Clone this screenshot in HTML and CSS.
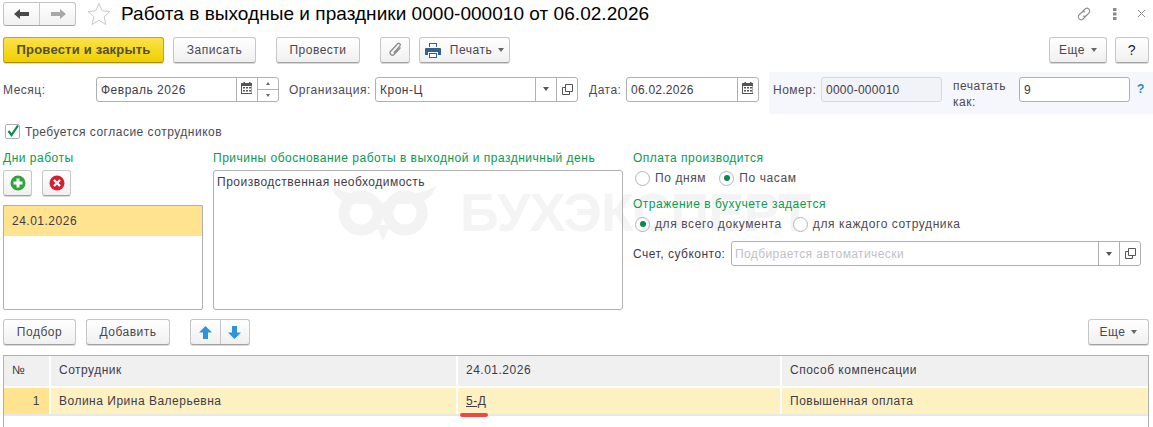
FILE: index.html
```html
<!DOCTYPE html>
<html lang="ru">
<head>
<meta charset="utf-8">
<title>Работа в выходные и праздники</title>
<link rel="stylesheet" href="styles.css">
</head>
<body>
<div class="page">
  <svg class="wm-owl" viewBox="0 0 108 58" width="108" height="58"><path fill="none" stroke="#f3f3f3" stroke-width="11" d="M31 13a17 17 0 1 0 .1 0zM75 13a17 17 0 1 0 .1 0z"/><path fill="#f3f3f3" d="M0 2C14 12 34 10 53 20 72 10 94 12 107 2 102 14 96 17 90 20L60 22 53 27 46 22 16 20C10 17 4 12 0 2zM46 42h14L53 58z"/></svg>
  <div class="wm-text">БУХЭКСПЕРТ</div>

  <header class="titlebar">
    <div class="nav">
      <span class="nav-cell"><svg width="16" height="12" viewBox="0 0 16 12"><path fill="#4a4a4a" d="M0 6l6-5v3h9v4H6v3z"/></svg></span>
      <span class="nav-cell"><svg width="16" height="12" viewBox="0 0 16 12"><path fill="#a8a8a8" d="M16 6l-6-5v3H1v4h9v3z"/></svg></span>
    </div>
    <svg class="star" width="24" height="24" viewBox="0 0 24 24"><path fill="#fff" stroke="#c9c9c9" d="M12 1.500l3.200 7.300 7.800.7-5.900 5.200 1.800 7.800L12 18.300 5.100 22.500l1.800-7.800L1 9.500l7.800-.7z"/></svg>
    <h1 class="title">Работа в выходные и праздники 0000-000010 от 06.02.2026</h1>
    <div class="win-icons">
      <svg width="18" height="18" viewBox="0 0 18 18"><g fill="none" stroke="#8a8a8a" stroke-width="1.100"><path d="M7.500 6.500l3-3a3 3 0 0 1 4 4l-3 3a3 3 0 0 1-3.500.5"/><path d="M10.500 11.500l-3 3a3 3 0 0 1-4-4l3-3a3 3 0 0 1 3.500-.5"/></g></svg>
      <svg class="dots" width="4" height="14" viewBox="0 0 4 14"><path fill="#8a8a8a" d="M0 1h3.500v3H0zM0 5.500h3.500v3H0zM0 10h3.500v3H0z"/></svg>
      <svg width="9" height="9" viewBox="0 0 9 9"><path stroke="#8a8a8a" d="M1 1l7 7M8 1L1 8"/></svg>
    </div>
  </header>

  <div class="toolbar top-toolbar">
    <button class="btn primary w161">Провести и закрыть</button>
    <button class="btn w83 ml9">Записать</button>
    <button class="btn w84 ml20">Провести</button>
    <button class="btn w30 ml20"><svg width="16" height="18" viewBox="0 0 16 18"><path fill="none" stroke="#8a8a8a" stroke-width="1.300" d="M13.500 6.500L7 13.500a2.300 2.300 0 0 1-3.300-3.200l7-7.500a1.500 1.500 0 0 1 2.200 2.100L6.800 12"/></svg></button>
    <button class="btn w91 ml9">
      <svg width="16" height="15" viewBox="0 0 16 15"><path fill="#31628f" d="M4 0h8v4H4zM1 5h14a1 1 0 0 1 1 1v6h-3V9H3v3H0V6a1 1 0 0 1 1-1zM4 10h8v5H4z"/><path fill="#fff" d="M5 1h6v3H5zM5 11h6v3H5z"/></svg>
      <span class="btn-text">Печать</span><i class="caret"></i>
    </button>
    <div class="spacer"></div>
    <button class="btn w58">Еще<i class="caret"></i></button>
    <button class="btn w34 ml8 qmark">?</button>
  </div>

  <div class="fields-row">
    <label class="lbl w93">Месяц:</label>
    <div class="field w183">
      <span class="val">Февраль 2026</span>
      <span class="addon cal"><svg class="cal-ico" width="12" height="12" viewBox="0 0 12 12"><path fill="#555" d="M1 1h1.500V0H4v1h4V0h1.500v1H11v11H0V1zM1 4v7h9.500V4z"/><path fill="#555" d="M2 5h2v1.500H2zM5 5h2v1.500H5zM8 5h2v1.500H8zM2 8h2v1.500H2zM5 8h2v1.500H5zM8 8h2v1.500H8z"/></svg></span>
      <span class="addon spin"><i class="up"></i><i class="down"></i></span>
    </div>
    <label class="lbl ml10 w86">Организация:</label>
    <div class="field w203">
      <span class="val">Крон-Ц</span>
      <span class="addon dd"><i class="caret dark"></i></span>
      <span class="addon cp"><svg width="11" height="11" viewBox="0 0 11 11"><path fill="none" stroke="#555" d="M3.500.5h7v7h-7zM3.500 3.500H.5v7h7V7.500"/></svg></span>
    </div>
    <label class="lbl ml11 w37">Дата:</label>
    <div class="field w133">
      <span class="val digits">06.02.2026</span>
      <span class="addon cal"><svg class="cal-ico" width="12" height="12" viewBox="0 0 12 12"><path fill="#555" d="M1 1h1.500V0H4v1h4V0h1.500v1H11v11H0V1zM1 4v7h9.500V4z"/><path fill="#555" d="M2 5h2v1.500H2zM5 5h2v1.500H5zM8 5h2v1.500H8zM2 8h2v1.500H2zM5 8h2v1.500H5zM8 8h2v1.500H8z"/></svg></span>
    </div>
    <div class="num-panel">
      <label class="lbl w48">Номер:</label>
      <div class="field ro w121"><span class="val digits">0000-000010</span></div>
      <label class="lbl print-as">печатать как:</label>
      <div class="field w111"><span class="val">9</span></div>
      <span class="hint">?</span>
    </div>
  </div>

  <label class="check-row">
    <svg width="16" height="16" viewBox="0 0 16 16"><rect x=".5" y=".5" width="14" height="14" rx="1.500" fill="#fff" stroke="#b0b0b0"/><path fill="none" stroke="#0b8a4f" stroke-width="2.200" d="M3.500 7l3 4L13 1.500"/></svg>
    Требуется согласие сотрудников
  </label>

  <div class="mid">
    <section class="col-days">
      <div class="green">Дни работы</div>
      <div class="icon-btns">
        <button class="btn w29"><svg width="16" height="16" viewBox="0 0 16 16"><circle cx="8" cy="8" r="7.500" fill="#2fa43a"/><path fill="#fff" d="M6.500 3.500h3v3h3v3h-3v3h-3v-3h-3v-3h3z"/></svg></button>
        <button class="btn w29 ml10"><svg width="16" height="16" viewBox="0 0 16 16"><circle cx="8" cy="8" r="7.500" fill="#d4202e"/><path stroke="#fff" stroke-width="2.200" d="M5 5l6 6M11 5l-6 6"/></svg></button>
      </div>
      <div class="day-list"><div class="day-sel">24.01.2026</div></div>
    </section>
    <section class="col-reason">
      <div class="green">Причины обоснование работы в выходной и праздничный день</div>
      <div class="reason-box">Производственная необходимость</div>
    </section>
    <section class="col-pay">
      <div class="green">Оплата производится</div>
      <div class="radios r1">
        <span class="radio"></span><span class="r-text">По дням</span>
        <span class="radio on next"></span><span class="r-text">По часам</span>
      </div>
      <div class="green g2">Отражение в бухучете задается</div>
      <div class="radios r2">
        <span class="radio on"></span><span class="r-text">для всего документа</span>
        <span class="radio next"></span><span class="r-text">для каждого сотрудника</span>
      </div>
      <div class="acc-row">
        <label class="lbl w98 dark-lbl">Счет, субконто:</label>
        <div class="field grow">
          <span class="val ph">Подбирается автоматически</span>
          <span class="addon dd"><i class="caret dark"></i></span>
          <span class="addon cp"><svg width="11" height="11" viewBox="0 0 11 11"><path fill="none" stroke="#555" d="M3.500.5h7v7h-7zM3.500 3.500H.5v7h7V7.500"/></svg></span>
        </div>
      </div>
    </section>
  </div>

  <div class="toolbar low-toolbar">
    <button class="btn w73">Подбор</button>
    <button class="btn w84 ml10">Добавить</button>
    <div class="arrows">
      <span class="arrow-cell"><svg width="13" height="13" viewBox="0 0 13 13"><path fill="#2f93dc" d="M6.500 0L13 6.500H9V13H4V6.500H0z"/></svg></span>
      <span class="arrow-cell"><svg width="13" height="13" viewBox="0 0 13 13"><path fill="#2f93dc" d="M6.500 13L13 6.500H9V0H4v6.500H0z"/></svg></span>
    </div>
    <div class="spacer"></div>
    <button class="btn w61">Еще<i class="caret"></i></button>
  </div>

  <div class="table">
    <div class="thead">
      <div class="th">№</div><div class="th">Сотрудник</div><div class="th">24.01.2026</div><div class="th">Способ компенсации</div>
    </div>
    <div class="trow">
      <div class="td num">1</div><div class="td">Волина Ирина Валерьевна</div><div class="td"><u>5-Д</u><span class="red-mark"></span></div><div class="td">Повышенная оплата</div>
    </div>
  </div>
</div>
</body>
</html>
```
FILE: styles.css
```css
* { box-sizing: border-box; }
html, body { margin: 0; height: 100%; background: #fff; overflow: hidden; }
body { font: 12px/16px "Liberation Sans", Arial, sans-serif; letter-spacing: .5px; color: #3f3b4a; }
.page { position: relative; width: 1153px; height: 427px; padding: 0 4px 0 3px; overflow: hidden; }

.wm-owl { position: absolute; left: 330px; top: 183px; }
.wm-text { position: absolute; left: 460px; top: 181px; font: bold 54px/62px "Liberation Sans", Arial, sans-serif; letter-spacing: -.8px; color: #f4f4f4; white-space: nowrap; }

.titlebar { position: relative; display: flex; align-items: center; height: 30px; }
.nav { display: flex; width: 73px; height: 24px; margin-top: -3px; border: 1px solid #c4c4c4; border-bottom-color: #a5a5a5; border-radius: 3px; background: linear-gradient(#fff, #f1f1f1); }
.nav-cell { flex: 1; display: flex; align-items: center; justify-content: center; }
.nav-cell + .nav-cell { border-left: 1px solid #c9c9c9; }
.star { margin: -3px 0 0 11px; }
.title { margin: -3px 0 0 10px; font: normal 19px/24px "Liberation Sans", Arial, sans-serif; letter-spacing: .04px; color: #000; }
.win-icons { margin: -3px 3px 0 auto; display: flex; align-items: center; gap: 20px; }

.toolbar { position: relative; display: flex; align-items: center; }
.top-toolbar { height: 26px; margin-top: 7px; }
.low-toolbar { height: 26px; margin-top: 9px; }
.spacer { flex: 1; }

.btn { display: inline-flex; align-items: center; justify-content: center; height: 26px; padding: 0; border: 1px solid #c6c6c6; border-bottom-color: #a2a2a2; border-radius: 3px; background: linear-gradient(#fff, #f0f0f0); font: inherit; letter-spacing: inherit; color: #4a4650; box-shadow: 0 1px 0 #d8d8d8; }
.primary { border-color: #c7a900; border-bottom-color: #a58c00; background: linear-gradient(#fbe24b, #f0cf00); color: #54502c; font-weight: bold; font-size: 13px; letter-spacing: .2px; }
.qmark { font-size: 14px; font-weight: normal; color: #222; }
.btn-text { margin: 0 0 0 9px; }
.w161 { width: 161px; } .w83 { width: 83px; } .w84 { width: 84px; } .w30 { width: 30px; } .w91 { width: 91px; } .w58 { width: 58px; } .w34 { width: 34px; } .w29 { width: 29px; } .w73 { width: 73px; } .w61 { width: 61px; }
.ml8 { margin-left: 8px; } .ml9 { margin-left: 9px; } .ml10 { margin-left: 10px; } .ml11 { margin-left: 11px; } .ml20 { margin-left: 20px; }

.caret { display: inline-block; width: 0; height: 0; margin-left: 6px; border: 3px solid transparent; border-top: 4px solid #666; border-bottom: 0; }

.fields-row { position: relative; display: flex; align-items: center; height: 42px; margin-top: 9px; margin-right: -4px; }
.lbl { display: block; flex: none; color: #4d4a55; }
.dark-lbl { color: #3f3b4a; }
.w93 { width: 93px; } .w86 { width: 86px; } .w37 { width: 37px; } .w48 { width: 48px; } .w98 { width: 98px; }
.field { position: relative; display: flex; flex: none; align-items: stretch; height: 25px; border: 1px solid #b0b0b0; border-radius: 3px; background: #fff; margin-top: -8px; }
.w183 { width: 183px; } .w203 { width: 203px; } .w133 { width: 133px; } .w121 { width: 121px; } .w111 { width: 111px; }
.grow { flex: 1; margin-top: 0; }
.val { flex: 1; min-width: 0; padding: 4px 0 0 4px; white-space: nowrap; overflow: hidden; }
.digits { letter-spacing: .25px; }
.ph { color: #c2c0c6; letter-spacing: .4px; padding-left: 3px; }
.ro { background: #f2f3f8; border-color: #d8d8de; }
.addon { flex: none; display: flex; align-items: center; justify-content: center; border-left: 1px solid #b0b0b0; }
.cal { width: 21px; } .spin { width: 21px; flex-direction: column; }
.dd { width: 21px; } .cp { width: 21px; }
.cal-ico { margin-top: -3px; }
.spin i { flex: 1; width: 100%; position: relative; }
.spin i::after { content: ""; position: absolute; left: 8px; top: 4px; border: 2.500px solid transparent; }
.spin .up { border-bottom: 1px solid #b0b0b0; }
.spin .up::after { border-bottom: 3px solid #666; border-top: 0; }
.spin .down::after { border-top: 3px solid #666; border-bottom: 0; }
.caret.dark { margin: 0; border-top-color: #555; }

.fields-row .lbl { margin-top: -7px; }
.num-panel { display: flex; flex: 1; align-items: center; height: 42px; margin-left: 10px; padding: 0 0 0 4px; background: #f6f7fc; }
.num-panel .field { margin-top: -8px; }
.print-as { width: 66px; margin: 0 0 0 11px; line-height: 16px; }
.fields-row .print-as { margin-top: 2px; }
.hint { margin: -8px 0 0 7px; color: #2a86c8; font-weight: bold; }

.check-row { position: relative; display: flex; align-items: center; gap: 4px; height: 16px; margin: 10px 0 0 2px; color: #4d4a55; }

.mid { position: relative; display: flex; margin-top: 10px; }
.green { color: #0a9a52; height: 16px; white-space: nowrap; }
.col-days { width: 200px; }
.icon-btns { display: flex; margin-top: 4px; }
.day-list { height: 105px; margin-top: 9px; border: 1px solid #b0b0b0; border-radius: 0 0 2px 2px; }
.day-sel { height: 30px; padding: 7px 0 0 8px; background: #ffe38f; color: #3f3b4a; }
.col-reason { width: 410px; margin-left: 10px; }
.reason-box { height: 140px; margin-top: 4px; padding: 3px 3px; border: 1px solid #b0b0b0; border-radius: 3px; background: transparent; }
.col-pay { width: 508px; margin-left: 10px; }
.radios { display: flex; align-items: center; height: 16px; color: #4d4a55; }
.r1, .r2 { margin-top: 4px; }
.g2 { margin-top: 10px; }
.radio { position: relative; flex: none; width: 15px; height: 15px; margin: 0 5px 0 2px; border: 1px solid #b4b4b4; border-radius: 50%; background: #fff; }
.r1 .next { margin-left: 13px; }
.r2 .next { margin-left: 11px; }
.radio.on::after { content: ""; position: absolute; left: 3.500px; top: 3.500px; width: 6px; height: 6px; border-radius: 50%; background: #0a8a4c; }
.r-text { white-space: nowrap; letter-spacing: .6px; }
.acc-row { display: flex; align-items: center; margin-top: 9px; }
.acc-row .field { margin-top: 0; }

.arrows { display: flex; width: 60px; height: 26px; margin-left: 20px; border: 1px solid #c6c6c6; border-bottom-color: #a2a2a2; border-radius: 3px; background: linear-gradient(#fff, #f0f0f0); box-shadow: 0 1px 0 #d8d8d8; }
.arrow-cell { flex: 1; display: flex; align-items: center; justify-content: center; }
.arrow-cell + .arrow-cell { border-left: 1px solid #c6c6c6; }

.table { position: relative; height: 80px; margin-top: 10px; border: 1px solid #b0b0b0; border-bottom: 0; }
.thead, .trow { display: grid; grid-template-columns: 47px 407px 324px 1fr; }
.thead { height: 32px; border-bottom: 2px solid #fff; }
.th { padding: 6px 0 0 8px; background: #f0f0f0; border-right: 2px solid #fff; }
.th:last-child { border-right: 0; }
.trow { height: 28px; border-bottom: 2px solid #e8e8e8; }
.td { position: relative; padding: 5px 0 0 8px; background: #fdf1c1; border-right: 2px solid #fff; }
.td:last-child { border-right: 0; }
.td.num { padding: 5px 9px 0 0; text-align: right; background: #ffe38f; }
.red-mark { position: absolute; left: 2px; top: 25px; width: 28px; height: 4px; border-radius: 2px; background: #f44444; }
```
